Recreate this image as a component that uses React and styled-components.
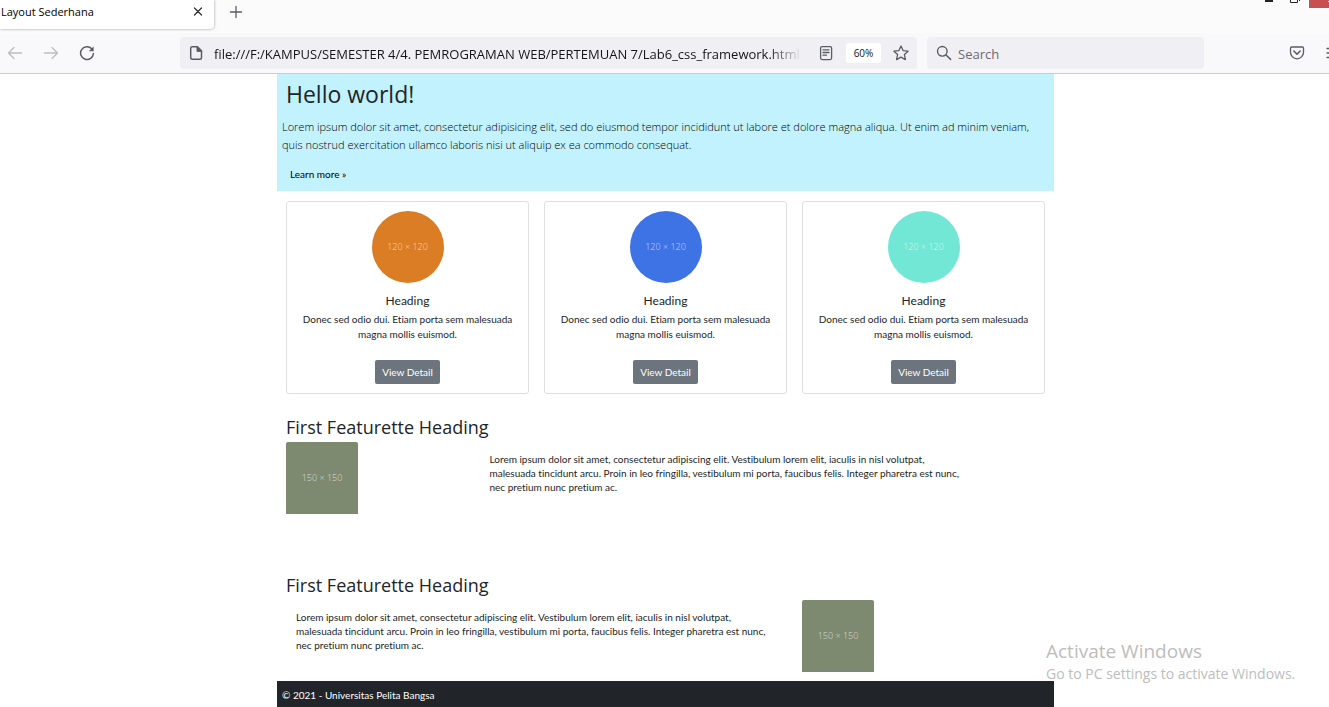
import React from "react";
import styled, { createGlobalStyle } from "styled-components";

const GlobalStyle = createGlobalStyle`
  *, *::before, *::after { box-sizing: border-box; }
  body {
    margin: 0;
    background: #fff;
    color: #212529;
    font-family: "Open Sans", "Noto Sans", sans-serif;
    font-size: 10px;
    line-height: 14px;
    font-variant-ligatures: none;
  }
  h1, h2, h3, p { margin: 0; font-weight: 400; }
  button, input { font-family: inherit; border: 0; padding: 0; background: none; }
`;

const copyFont = `Lato, "Open Sans", sans-serif`;

const Window = styled.div`
  position: relative;
  display: flex;
  flex-direction: column;
  min-height: 100vh;
  overflow: hidden;
`;

const TabStrip = styled.div`
  display: flex;
  align-items: flex-start;
  height: 33px;
  background: #fbfbfb;
`;

const Tab = styled.div`
  display: flex;
  align-items: center;
  justify-content: space-between;
  width: 214px;
  height: 29px;
  padding: 0 10px 5px 1px;
  background: #fff;
  border-radius: 0 0 4px 0;
  box-shadow: 0 0 3px rgba(0, 0, 0, 0.4);
  color: #000;
  font-size: 11px;
`;

const IconButton = styled.button`
  display: flex;
  flex: none;
  align-items: center;
  justify-content: center;
  width: ${(p) => p.$size || 16}px;
  height: ${(p) => p.$size || 16}px;
  color: ${(p) => (p.$faded ? "#bdbdc1" : "#5b5b66")};
`;

const NewTab = styled(IconButton)`
  margin: 4px 0 0 14px;
`;

const WindowControls = styled.svg`
  display: block;
  margin-left: auto;
`;

const Toolbar = styled.div`
  display: flex;
  align-items: center;
  height: 41px;
  padding-left: 7px;
  background: #f9f9fb;
  border-bottom: 1px solid #cccccf;
`;

const NavButtons = styled.div`
  display: flex;
  flex: none;
  gap: 20px;
  width: 173px;
`;

const Field = styled.div`
  display: flex;
  align-items: center;
  height: 32px;
  border-radius: 4px;
  background: #f0f0f4;
  color: #5b5b66;
`;

const UrlField = styled(Field)`
  flex: 1;
  min-width: 0;
  padding: 0 8px;
`;

const SearchField = styled(Field)`
  width: 277px;
  margin-left: 10px;
  padding: 0 9px;
  gap: 6px;
`;

const TextInput = styled.input`
  flex: 1;
  min-width: 0;
  height: 24px;
  padding-top: 2px;
  color: #15141a;
  font-size: 13px;
  outline: 0;
  &::placeholder { color: #6a6a74; opacity: 1; }
`;

const UrlInput = styled(TextInput)`
  margin: 0 6px 0 10px;
  mask-image: linear-gradient(to left, transparent 10px, #000 44px);
`;

const ZoomButton = styled.button`
  width: 35px;
  height: 20px;
  margin: 0 12px;
  border-radius: 3px;
  background: #fff;
  color: #15141a;
  font-size: 10px;
`;

const ToolbarEnd = styled.div`
  display: flex;
  flex: none;
  justify-content: flex-end;
  gap: 20px;
  width: 125px;
  margin-right: -12px;
  margin-left: 12px;
`;

const Viewport = styled.div`
  display: flex;
  flex: 1;
  flex-direction: column;
  padding-left: 2px;
`;

const Container = styled.div`
  display: flex;
  flex: 1;
  flex-direction: column;
  width: 100%;
  max-width: 777px;
  margin: 0 auto;
  font-family: ${copyFont};
`;

const Hero = styled.header`
  padding: 4px 5px 9px;
  background: #c2f2fe;
`;

const HeroTitle = styled.h1`
  padding-left: 4px;
  font-family: "Open Sans", sans-serif;
  font-size: 23px;
  line-height: 32px;
`;

const Lead = styled.p`
  margin-top: 8px;
  color: #000;
  font-family: "Open Sans", sans-serif;
  font-size: 11px;
  font-weight: 300;
  line-height: 18px;
`;

const HeroLink = styled.a`
  display: inline-block;
  margin-top: 12px;
  padding: 0 8px;
  color: #000;
  line-height: 16px;
  text-decoration: none;
`;

const Cards = styled.section`
  display: grid;
  grid-template-columns: repeat(3, 1fr);
  gap: 15px;
  padding: 10px 9px 0;
`;

const Card = styled.article`
  display: flex;
  flex-direction: column;
  align-items: center;
  padding: 9px;
  border: 1px solid #dfdfdf;
  border-radius: 3px;
  text-align: center;
`;

const Placeholder = styled.div`
  display: flex;
  align-items: center;
  justify-content: center;
  width: 72px;
  height: 72px;
  border-radius: ${(p) => (p.$round ? "50%" : "2px 2px 0 0")};
  background: ${(p) => p.$color};
  color: rgba(255, 255, 255, 0.7);
  font-family: "Open Sans", sans-serif;
  font-size: 9px;
  font-weight: 300;
`;

const CardTitle = styled.h3`
  margin-top: 10px;
  font-size: 12px;
  line-height: 16px;
`;

const CardText = styled.p`
  margin: 3px 0 18px;
  line-height: 15px;
`;

const DetailButton = styled.button`
  height: 24px;
  padding: 0 7px;
  border-radius: 2px;
  background: #6c757d;
  color: #fff;
  font-size: 10px;
`;

const Featurette = styled.section`
  padding: ${(p) => (p.$first ? 21 : 59)}px 1px 0 2px;
`;

const FeaturetteTitle = styled.h2`
  padding: 0 7px 3px;
  font-family: "Open Sans", sans-serif;
  font-size: 18px;
  line-height: 24px;
`;

const FeaturetteRow = styled.div`
  display: grid;
  grid-template-columns: repeat(12, 1fr);
`;

const Column = styled.div`
  grid-column: span ${(p) => p.$span};
  padding: 0 7px;
`;

const FeaturetteText = styled.p`
  padding: 10px 10px 0;
`;

const Footer = styled.footer`
  margin-top: 9px;
  padding: 7px 5px 5px;
  background: #212529;
  color: #fff;
`;

const Watermark = styled.div`
  position: absolute;
  right: 28px;
  bottom: 22px;
  width: 255px;
  color: #bdbdbd;
  font-size: 14px;
  line-height: 22px;
  white-space: nowrap;
  pointer-events: none;
`;

const WatermarkTitle = styled.div`
  font-size: 19px;
  line-height: 24px;
`;

const Icon = ({ children, size = 16 }) => (
  <svg width={size} height={size} viewBox={`0 0 ${size} ${size}`} fill="none" stroke="currentColor" strokeWidth="1.3" strokeLinecap="round" strokeLinejoin="round" aria-hidden="true">
    {children}
  </svg>
);

const cards = [
  { id: 1, color: "#da7d25" },
  { id: 2, color: "#3e73e6" },
  { id: 3, color: "#72e7d5" },
];

const featuretteCopy =
  "Lorem ipsum dolor sit amet, consectetur adipiscing elit. Vestibulum lorem elit, iaculis in nisl volutpat, malesuada tincidunt arcu. Proin in leo fringilla, vestibulum mi porta, faucibus felis. Integer pharetra est nunc, nec pretium nunc pretium ac.";

function BrowserChrome() {
  return (
    <>
      <TabStrip>
        <Tab>
          <span>Layout Sederhana</span>
          <IconButton aria-label="Close tab" $size={12}>
            <svg width="12" height="12" viewBox="0 0 12 12" stroke="#2b2a33" strokeWidth="1.2" strokeLinecap="round"><path d="M2.5 2l7 7M9.5 2l-7 7" /></svg>
          </IconButton>
        </Tab>
        <NewTab aria-label="New tab">
          <Icon><path d="M8 2.5v11M2.5 8h11" /></Icon>
        </NewTab>
        <WindowControls width="64" height="9" viewBox="0 0 64 9" aria-hidden="true">
          <path d="M0 0h8v2H0z" fill="#222" />
          <path d="M25.5 0v2.5h7V0M34.5 0v1" fill="none" stroke="#222" />
          <path d="M44 0h20v8H44z" fill="#c75050" />
          <path d="M63 1h1v1h-1z" fill="#fff" />
        </WindowControls>
      </TabStrip>
      <Toolbar>
        <NavButtons>
          <IconButton aria-label="Back" $faded><Icon><path d="M14.5 8H1.5M7 2.5L1.5 8L7 13.5" /></Icon></IconButton>
          <IconButton aria-label="Forward" $faded><Icon><path d="M1.5 8h13M9 2.5L14.5 8L9 13.5" /></Icon></IconButton>
          <IconButton aria-label="Reload">
            <Icon>
              <path d="M12.7 3.8A6.4 6.4 0 1 0 14.4 8.5" strokeWidth="1.5" />
              <path d="M14.6 1.4v4.8H9.8z" fill="currentColor" stroke="none" />
            </Icon>
          </IconButton>
        </NavButtons>
        <UrlField>
          <Icon>
            <path d="M4.2 1.8h5.3l4 4v6.9a1.5 1.5 0 0 1-1.5 1.5H4.2a1.5 1.5 0 0 1-1.5-1.5V3.3a1.5 1.5 0 0 1 1.5-1.5z" strokeWidth="1.5" />
            <path d="M9 2v4.3h4.3z" fill="currentColor" strokeWidth="1" />
          </Icon>
          <UrlInput aria-label="Address" readOnly value="file:///F:/KAMPUS/SEMESTER 4/4. PEMROGRAMAN WEB/PERTEMUAN 7/Lab6_css_framework.html" />
          <IconButton aria-label="Reader view">
            <Icon><rect x="2.6" y="1.6" width="11" height="13" rx="1.5" /><path d="M5 4.8h6M5 7.5h6M5 10.2h3.5" /></Icon>
          </IconButton>
          <ZoomButton>60%</ZoomButton>
          <IconButton aria-label="Bookmark">
            <Icon><path d="M8 1l2.1 4.6 5 .6-3.7 3.4 1 5L8 12.1l-4.4 2.5 1-5L.9 6.2l5-.6z" /></Icon>
          </IconButton>
        </UrlField>
        <SearchField>
          <Icon><circle cx="6.3" cy="6.3" r="4.8" strokeWidth="1.4" /><path d="M10 10l4.6 4.4" strokeWidth="1.5" /></Icon>
          <TextInput aria-label="Search" placeholder="Search" />
        </SearchField>
        <ToolbarEnd>
          <IconButton aria-label="Pocket">
            <Icon><path d="M2.7 2h10.6a1.2 1.2 0 0 1 1.2 1.2v4.1a6.5 6.5 0 0 1-13 0V3.2A1.2 1.2 0 0 1 2.7 2z" /><path d="M4.8 6L8 9.1L11.2 6" strokeWidth="1.5" /></Icon>
          </IconButton>
          <IconButton aria-label="Menu">
            <Icon><path d="M2 3.5h13M2 8h13M2 12.5h13" /></Icon>
          </IconButton>
        </ToolbarEnd>
      </Toolbar>
    </>
  );
}

export default function App() {
  return (
    <>
      <GlobalStyle />
      <Window>
        <BrowserChrome />
        <Viewport>
          <Container>
            <Hero>
              <HeroTitle>Hello world!</HeroTitle>
              <Lead>
                Lorem ipsum dolor sit amet, consectetur adipisicing elit, sed do eiusmod tempor incididunt ut labore et dolore magna aliqua. Ut enim ad minim veniam, quis nostrud exercitation ullamco laboris nisi ut aliquip ex ea commodo consequat.
              </Lead>
              <HeroLink href="#more">Learn more »</HeroLink>
            </Hero>
            <Cards>
              {cards.map((card) => (
                <Card key={card.id}>
                  <Placeholder $round $color={card.color}>120 × 120</Placeholder>
                  <CardTitle>Heading</CardTitle>
                  <CardText>Donec sed odio dui. Etiam porta sem malesuada magna mollis euismod.</CardText>
                  <DetailButton>View Detail</DetailButton>
                </Card>
              ))}
            </Cards>
            <Featurette $first>
              <FeaturetteTitle>First Featurette Heading</FeaturetteTitle>
              <FeaturetteRow>
                <Column $span={3}><Placeholder $color="#7d8a70">150 × 150</Placeholder></Column>
                <Column $span={8}><FeaturetteText>{featuretteCopy}</FeaturetteText></Column>
              </FeaturetteRow>
            </Featurette>
            <Featurette>
              <FeaturetteTitle>First Featurette Heading</FeaturetteTitle>
              <FeaturetteRow>
                <Column $span={8}><FeaturetteText>{featuretteCopy}</FeaturetteText></Column>
                <Column $span={3}><Placeholder $color="#7d8a70">150 × 150</Placeholder></Column>
              </FeaturetteRow>
            </Featurette>
            <Footer>© 2021 - Universitas Pelita Bangsa</Footer>
          </Container>
        </Viewport>
        <Watermark>
          <WatermarkTitle>Activate Windows</WatermarkTitle>
          Go to PC settings to activate Windows.
        </Watermark>
      </Window>
    </>
  );
}
